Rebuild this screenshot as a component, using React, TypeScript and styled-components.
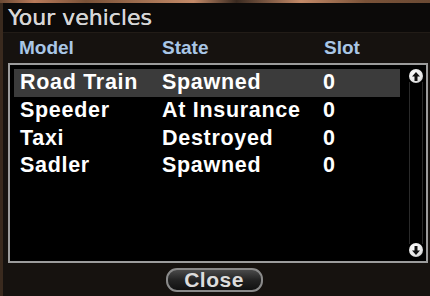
import styled, { createGlobalStyle } from 'styled-components';

const GlobalStyle = createGlobalStyle`
  html, body {
    margin: 0;
    padding: 0;
    background: #2b2119;
    overflow: hidden;
  }
  body {
    font-family: 'Liberation Sans', Arial, sans-serif;
  }
`;

interface IVehicle {
  model: string;
  state: string;
  slot: number;
}

const vehicles: IVehicle[] = [
  { model: 'Road Train', state: 'Spawned', slot: 0 },
  { model: 'Speeder', state: 'At Insurance', slot: 0 },
  { model: 'Taxi', state: 'Destroyed', slot: 0 },
  { model: 'Sadler', state: 'Spawned', slot: 0 },
];

const Scene = styled.div`
  width: 430px;
  height: 296px;
  display: flex;
  flex-direction: column;
  background: linear-gradient(90deg, #3a2a1e 0%, #2d241c 100%);
`;

const TopStrip = styled.div`
  height: 3px;
  background: linear-gradient(90deg, #6b4a34 0%, #b97a5a 8%, #7a5238 20%, #c48a68 45%, #3a2a20 55%, #c48a68 70%, #7a5238 85%, #6b4a34 100%);
`;

const Window = styled.div`
  flex: 1;
  margin-left: 3px;
  display: flex;
  flex-direction: column;
  background: #16120f;
`;

const TitleBar = styled.div`
  height: 29px;
  background: #0c0a09;
  border-bottom: 1px solid #221c17;
  display: flex;
  align-items: center;
  padding-left: 5px;
`;

const Title = styled.span`
  color: #d6d6d6;
  font-family: 'DejaVu Sans', 'Liberation Sans', sans-serif;
  font-size: 22px;
  text-shadow: 0.4px 0 0 #d6d6d6;
  margin-top: -1px;
`;

const HeaderRow = styled.div`
  height: 30px;
  display: grid;
  grid-template-columns: 143px 162px 1fr;
  align-items: center;
  padding-left: 16px;
`;

const HeaderCell = styled.span`
  color: #a9c6e6;
  font-weight: bold;
  font-size: 19px;
`;

const ListBox = styled.div`
  margin-left: 5px;
  width: 416px;
  height: 196px;
  border: 2px solid #9c9c9c;
  background: #000;
  display: flex;
`;

const Rows = styled.div`
  flex: 1;
  padding: 4px 0 0 4px;
  display: flex;
  flex-direction: column;
`;

const Row = styled.div<{ $selected?: boolean }>`
  height: 27.7px;
  width: 386px;
  display: grid;
  grid-template-columns: 142px 161px 1fr;
  align-items: center;
  padding-left: 6px;
  box-sizing: border-box;
  background: ${(p) => (p.$selected ? '#3b3b3b' : 'transparent')};
`;

const Cell = styled.span`
  color: #fff;
  font-weight: bold;
  font-size: 21.5px;
  letter-spacing: 0.7px;
  white-space: nowrap;
`;

const ScrollBar = styled.div`
  width: 16px;
  margin-right: 2px;
  padding: 4px 0;
  display: flex;
  flex-direction: column;
  align-items: center;
  justify-content: space-between;
`;

const Track = styled.div`
  flex: 1;
  width: 12px;
  border-left: 1px solid #2a2a2a;
  border-right: 1px solid #2a2a2a;
  margin: -1px 0;
`;

const ArrowButton = styled.div`
  width: 14px;
  height: 14px;
  border-radius: 50%;
  background: radial-gradient(circle at 40% 35%, #ffffff 0%, #e6e6e6 60%, #9a9a9a 100%);
  display: flex;
  align-items: center;
  justify-content: center;
  z-index: 1;
`;

const Footer = styled.div`
  flex: 1;
  display: flex;
  justify-content: center;
  align-items: center;
  padding-right: 5px;
`;

const CloseButton = styled.button`
  width: 97px;
  height: 24px;
  margin-top: 1px;
  border-radius: 11px;
  border: 2px solid #8a8a8a;
  background: linear-gradient(180deg, #4a4a4a 0%, #232323 50%, #111 100%);
  color: #dcdcdc;
  font-family: 'Liberation Sans', Arial, sans-serif;
  font-weight: bold;
  font-size: 21px;
  line-height: 18px;
  padding: 0;
  letter-spacing: 0.5px;
`;

const Arrow = ({ down }: { down?: boolean }) => (
  <svg width="8" height="9" viewBox="0 0 8 9" style={{ transform: down ? 'rotate(180deg)' : undefined }}>
    <path d="M4 0 L8 4.5 L5.5 4.5 L5.5 9 L2.5 9 L2.5 4.5 L0 4.5 Z" fill="#111" />
  </svg>
);

const App: React.FC = () => {
  return (
    <>
      <GlobalStyle />
      <Scene>
        <TopStrip />
        <Window>
          <TitleBar>
            <Title>Your vehicles</Title>
          </TitleBar>
          <HeaderRow>
            <HeaderCell>Model</HeaderCell>
            <HeaderCell>State</HeaderCell>
            <HeaderCell>Slot</HeaderCell>
          </HeaderRow>
          <ListBox>
            <Rows>
              {vehicles.map((v, i) => (
                <Row key={v.model} $selected={i === 0}>
                  <Cell>{v.model}</Cell>
                  <Cell>{v.state}</Cell>
                  <Cell>{v.slot}</Cell>
                </Row>
              ))}
            </Rows>
            <ScrollBar>
              <ArrowButton>
                <Arrow />
              </ArrowButton>
              <Track />
              <ArrowButton>
                <Arrow down />
              </ArrowButton>
            </ScrollBar>
          </ListBox>
          <Footer>
            <CloseButton>Close</CloseButton>
          </Footer>
        </Window>
      </Scene>
    </>
  );
};

export default App;
